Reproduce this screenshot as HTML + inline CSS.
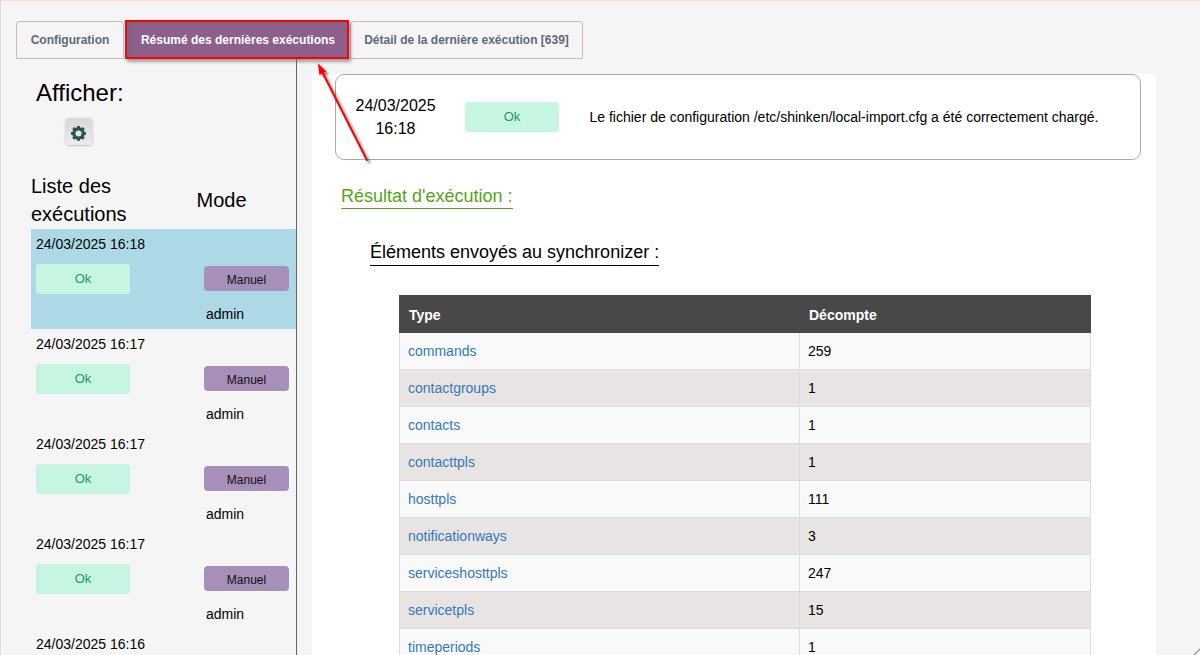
<!DOCTYPE html>
<html><head><meta charset="utf-8">
<style>
*{box-sizing:border-box;margin:0;padding:0}
html,body{width:1200px;height:655px;overflow:hidden}
body{background:#f5f5f5;font-family:"Liberation Sans",sans-serif;position:relative;color:#000}
.a{position:absolute;white-space:nowrap}
.topline{left:0;top:0;width:1200px;height:1px;background:#ffd8d8}
.leftline{left:0;top:0;width:1px;height:655px;background:#dcdee0}
.tab{position:absolute;top:21px;height:38px;border:1px solid #cbb6cb;border-radius:3px 3px 0 0;background:#f5f5f5;color:#5b6b7b;font-weight:bold;font-size:12px;line-height:36px;text-align:center}
.tab.act{top:20px;height:39px;background:#8d5f8b;border:2px solid #ff0000;border-radius:0;color:#fff;box-shadow:2px 3px 3px rgba(0,0,0,.35), inset 4px 2px 4px -2px rgba(95,105,115,.55);padding-left:2px}
.vline{left:296px;top:59px;width:1px;height:600px;background:#666}
.row{position:absolute;left:31px;width:265px;height:100px}
.row.sel{background:#add8e6}
.dt{position:absolute;left:5px;top:5px;font-size:14px;line-height:20px}
.ok{position:absolute;width:94px;height:30px;background:#c6f6e2;border-radius:3px;color:#25975f;font-size:13px;line-height:29px;text-align:center}
.man{position:absolute;left:173px;top:37px;width:85px;height:25px;background:#a68fb8;border-radius:4px;font-size:12px;line-height:29px;text-align:center;color:#111}
.adm{position:absolute;left:175px;top:75px;font-size:14px;line-height:20px}
.panel{left:312px;top:74px;width:844px;height:600px;background:#fff;border-radius:3px}
.msg{left:335px;top:74px;width:806px;height:86px;border:1px solid #aaa;border-radius:9px}
table{position:absolute;left:399px;top:295px;width:692px;border-collapse:collapse;font-size:14px}
th{background:#484848;color:#fff;text-align:left;height:37px;padding:2px 0 0 9px;font-weight:bold;border:1px solid #484848}
tr.f td{border-top:none}
td{height:37px;padding:0 0 0 8px;border:1px solid #ddd}
tr.o td{background:#f9f9f9}
tr.e td{background:#e8e4e3}
td a{color:#337ab7;text-decoration:none}
</style></head><body>
<div class="a topline"></div>
<div class="a leftline"></div>

<div class="tab" style="left:16px;width:108px">Configuration</div>
<div class="tab" style="left:350px;width:233px">Détail de la dernière exécution [639]</div>
<div class="tab act" style="left:125px;width:224px">Résumé des dernières exécutions</div>

<div class="a" style="left:36px;top:79px;font-size:24px;line-height:28px">Afficher:</div>
<div class="a" style="left:66px;top:119px;width:26px;height:26px;border-radius:3px;background:linear-gradient(#d7d7d7,#ededed);box-shadow:0 0 3px rgba(0,0,0,.28),0 1px 1px rgba(0,0,0,.08)"></div>

<svg class="a" style="left:64px;top:117px" width="30" height="30"><path transform="translate(14.5,16.4)" fill="#2d5253" fill-rule="evenodd" d="M-1.73,-5.75 L-1.44,-7.46 L1.44,-7.46 L1.73,-5.75 L2.30,-5.54 L2.84,-5.28 L4.26,-6.30 L6.30,-4.26 L5.28,-2.84 L5.54,-2.30 L5.75,-1.73 L7.46,-1.44 L7.46,1.44 L5.75,1.73 L5.54,2.30 L5.28,2.84 L6.30,4.26 L4.26,6.30 L2.84,5.28 L2.30,5.54 L1.73,5.75 L1.44,7.46 L-1.44,7.46 L-1.73,5.75 L-2.30,5.54 L-2.84,5.28 L-4.26,6.30 L-6.30,4.26 L-5.28,2.84 L-5.54,2.30 L-5.75,1.73 L-7.46,1.44 L-7.46,-1.44 L-5.75,-1.73 L-5.54,-2.30 L-5.28,-2.84 L-6.30,-4.26 L-4.26,-6.30 L-2.84,-5.28 L-2.30,-5.54 Z M3.00,0 A3.00,3.00 0 1,0 -3.00,0 A3.00,3.00 0 1,0 3.00,0 Z"/></svg>
<div class="a" style="left:31px;top:173px;font-size:20px;line-height:27.5px">Liste des<br>exécutions</div>
<div class="a" style="left:196.5px;top:187px;font-size:20px;line-height:27px">Mode</div>

<div class="row sel" style="top:229px"><div class="dt">24/03/2025 16:18</div><div class="ok" style="left:5px;top:35px">Ok</div><div class="man">Manuel</div><div class="adm">admin</div></div>
<div class="row" style="top:329px"><div class="dt">24/03/2025 16:17</div><div class="ok" style="left:5px;top:35px">Ok</div><div class="man">Manuel</div><div class="adm">admin</div></div>
<div class="row" style="top:429px"><div class="dt">24/03/2025 16:17</div><div class="ok" style="left:5px;top:35px">Ok</div><div class="man">Manuel</div><div class="adm">admin</div></div>
<div class="row" style="top:529px"><div class="dt">24/03/2025 16:17</div><div class="ok" style="left:5px;top:35px">Ok</div><div class="man">Manuel</div><div class="adm">admin</div></div>
<div class="row" style="top:629px"><div class="dt">24/03/2025 16:16</div></div>
<div class="a vline"></div>

<div class="a panel"></div>
<div class="a msg"></div>
<div class="a" style="left:355.5px;top:94px;font-size:16px;line-height:23px;text-align:center;width:80px">24/03/2025<br>16:18</div>
<div class="ok" style="left:465px;top:102px">Ok</div>
<div class="a" style="left:589.5px;top:108px;font-size:14px;line-height:18px">Le fichier de configuration /etc/shinken/local-import.cfg a été correctement chargé.</div>

<div class="a" style="left:341px;top:185px;font-size:18px;line-height:22px;color:#52a519;border-bottom:1px solid #52a519;padding-bottom:1px">Résultat d'exécution :</div>
<div class="a" style="left:370px;top:241px;font-size:18px;line-height:22px;border-bottom:1px solid #000;padding-bottom:2px">Éléments envoyés au synchronizer :</div>

<table>
<tr><th style="width:400px">Type</th><th>Décompte</th></tr>
<tr class="o f"><td><a>commands</a></td><td>259</td></tr>
<tr class="e"><td><a>contactgroups</a></td><td>1</td></tr>
<tr class="o"><td><a>contacts</a></td><td>1</td></tr>
<tr class="e"><td><a>contacttpls</a></td><td>1</td></tr>
<tr class="o"><td><a>hosttpls</a></td><td>111</td></tr>
<tr class="e"><td><a>notificationways</a></td><td>3</td></tr>
<tr class="o"><td><a>serviceshosttpls</a></td><td>247</td></tr>
<tr class="e"><td><a>servicetpls</a></td><td>15</td></tr>
<tr class="o"><td><a>timeperiods</a></td><td>1</td></tr>
</table>

<svg class="a" style="left:0;top:0" width="1200" height="655">
<defs><filter id="sh" x="-50%" y="-50%" width="200%" height="200%"><feGaussianBlur stdDeviation="1.2"/></filter></defs>
<g transform="translate(2.5,2.5)" opacity="0.45" filter="url(#sh)"><line x1="367.3" y1="160.8" x2="321" y2="69.5" stroke="#000" stroke-width="2"/><polygon points="317.8,63.3 326.3,71.5 319.4,74.9" fill="#000"/></g>
<line x1="367.3" y1="160.8" x2="321" y2="69.5" stroke="#ff0000" stroke-width="2"/>
<polygon points="317.8,63.3 326.3,71.5 319.4,74.9" fill="#ff0000"/>
<line x1="1193.5" y1="655.5" x2="1200.5" y2="648.5" stroke="#888" stroke-width="1.2"/>
</svg>
</body></html>
